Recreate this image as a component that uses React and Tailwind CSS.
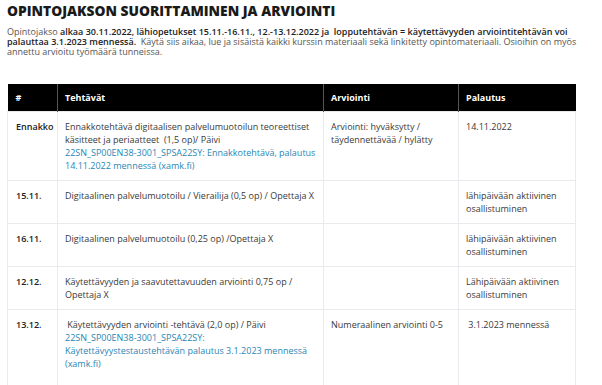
export default function App() {
  const link = "text-[#2a86b5]";
  const code = <span className="whitespace-nowrap">22SN_SP00EN38-3001_SPSA22SY:</span>;
  const rows = [
    {
      id: "Ennakko",
      task: (
        <>
          Ennakkotehtävä digitaalisen palvelumuotoilun teoreettiset käsitteet ja periaatteet&nbsp; (1,5 op)/ Päivi
          <br />
          <span className={link}>
            {code} Ennakkotehtävä, palautus
            <br />
            14.11.2022 mennessä (xamk.fi)
          </span>
        </>
      ),
      grade: "Arviointi: hyväksytty / täydennettävää / hylätty",
      due: "14.11.2022",
    },
    {
      id: "15.11.",
      task: "Digitaalinen palvelumuotoilu / Vierailija (0,5 op) / Opettaja X",
      grade: "",
      due: "lähipäivään aktiivinen osallistuminen",
    },
    {
      id: "16.11.",
      task: "Digitaalinen palvelumuotoilu (0,25 op) /Opettaja X",
      grade: "",
      due: "lähipäivään aktiivinen osallistuminen",
    },
    {
      id: "12.12.",
      task: "Käytettävyyden ja saavutettavuuden arviointi  0,75 op / Opettaja X",
      grade: "",
      due: "Lähipäivään aktiivinen osallistuminen",
    },
    {
      id: "13.12.",
      task: (
        <>
          &nbsp;Käytettävyyden arviointi -tehtävä (2,0 op) / Päivi
          <br />
          <span className={link}>
            {code}
            <br />
            Käytettävyystestaustehtävän palautus 3.1.2023 mennessä
            <br />
            (xamk.fi)
          </span>
        </>
      ),
      grade: "Numeraalinen arviointi 0-5",
      due: "\u00a03.1.2023 mennessä",
      tall: true,
    },
  ];

  return (
    <div className="w-[602px] h-[385px] overflow-hidden bg-white px-[7px] pt-[1px] font-['Open_Sans',sans-serif] text-[#3a3a3a]">
      <h1 className="text-[13.8px] leading-[20px] font-extrabold text-[#1a1a1a]">
        OPINTOJAKSON SUORITTAMINEN JA ARVIOINTI
      </h1>
      <p className="mt-[6px] whitespace-nowrap text-[9px] leading-[10px] text-[#555]">
        Opintojakso{" "}
        <b className="font-semibold text-[#222]">
          alkaa 30.11.2022, lähiopetukset 15.11.-16.11., 12.-13.12.2022 ja&nbsp; lopputehtävän = käytettävyyden arviointitehtävän voi
          <br />
          palauttaa 3.1.2023 mennessä.
        </b>
        &nbsp; Käytä siis aikaa, lue ja sisäistä kaikki kurssin materiaali sekä linkitetty opintomateriaali. Osioihin on myös
        <br />
        annettu arvioitu työmäärä tunneissa.
      </p>

      <table className="mt-[27px] w-[568px] border-collapse table-fixed text-[9px] leading-[13px]">
        <colgroup>
          <col className="w-[50px]" />
          <col className="w-[266px]" />
          <col className="w-[135px]" />
          <col className="w-[117px]" />
        </colgroup>
        <thead>
          <tr className="bg-black text-white h-[27px]">
            <th className="text-left font-bold pl-[8px] pr-[3px] border-r border-[#555]">#</th>
            <th className="text-left font-bold pl-[7px] pr-[3px] border-r border-[#555]">Tehtävät</th>
            <th className="text-left font-bold pl-[7px] pr-[3px] border-r border-[#555]">Arviointi</th>
            <th className="text-left font-bold pl-[7px] pr-[3px]">Palautus</th>
          </tr>
        </thead>
        <tbody>
          {rows.map((r) => (
            <tr key={r.id} className={r.tall ? "h-[90px]" : ""}>
              <td className="align-top border border-[#e9eaee] pl-[8px] pr-[3px] py-[8px] font-semibold text-[#222]">{r.id}</td>
              <td className="align-top border border-[#e9eaee] pl-[7px] pr-[3px] py-[8px]">{r.task}</td>
              <td className="align-top border border-[#e9eaee] pl-[7px] pr-[3px] py-[8px]">{r.grade}</td>
              <td className="align-top border border-[#e9eaee] pl-[7px] pr-[3px] py-[8px]">{r.due}</td>
            </tr>
          ))}
        </tbody>
      </table>
    </div>
  );
}
